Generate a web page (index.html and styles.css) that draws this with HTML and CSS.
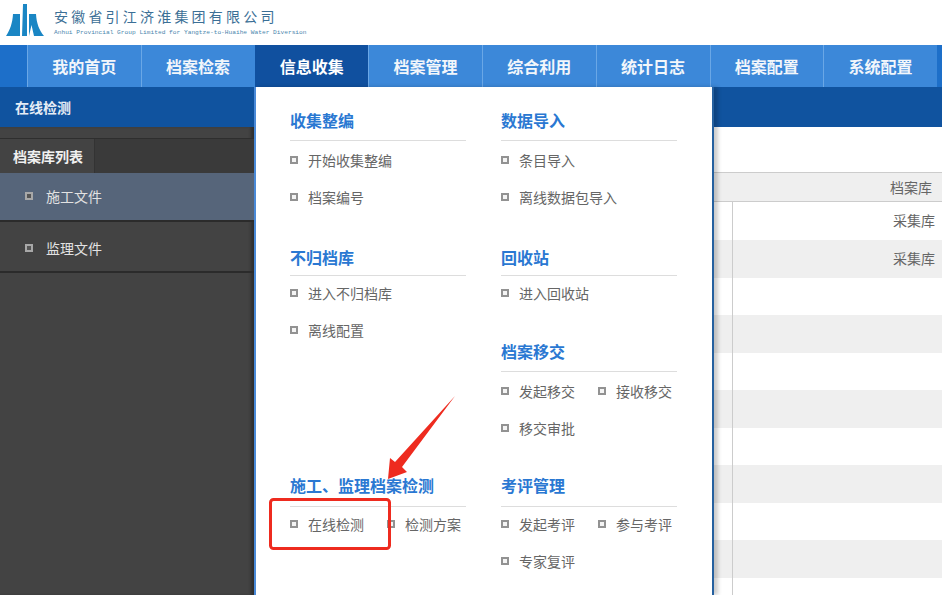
FILE: index.html
```html
<!DOCTYPE html>
<html lang="zh-CN">
<head>
<meta charset="utf-8">
<title>在线检测</title>
<link rel="stylesheet" href="styles.css">
</head>
<body>
<div class="page">
  <header class="brand">
    <svg class="logo" width="38" height="32" viewBox="0 0 38 32">
      <path d="M7 10h7v22H0c4-6 6.500-13 7-22z"/>
      <path d="M17 0h4v32h-5z"/>
      <path d="M23 10h7c.5 9 3 16 8 22H28l-2.500-11-2.500 11z"/>
    </svg>
    <div class="brand-text">
      <div class="brand-cn">安徽省引江济淮集团有限公司</div>
      <div class="brand-en">Anhui Provincial Group Limited for Yangtze-to-Huaihe Water Diversion</div>
    </div>
  </header>

  <nav class="nav">
    <a class="nav-item">我的首页</a>
    <a class="nav-item">档案检索</a>
    <a class="nav-item is-active">信息收集</a>
    <a class="nav-item">档案管理</a>
    <a class="nav-item">综合利用</a>
    <a class="nav-item">统计日志</a>
    <a class="nav-item">档案配置</a>
    <a class="nav-item">系统配置</a>
  </nav>

  <div class="subbar">在线检测</div>

  <div class="main">
    <aside class="sidebar">
      <div class="tabs"><span class="tab">档案库列表</span></div>
      <div class="side-item is-current"><i class="bullet"></i>施工文件</div>
      <div class="side-item"><i class="bullet"></i>监理文件</div>
    </aside>
    <section class="content">
      <div class="table">
        <div class="thead"><span>档案库</span></div>
        <div class="row first"><span class="cell">采集库</span></div>
        <div class="row alt"><span class="cell">采集库</span></div>
        <div class="row"><span class="cell"></span></div>
        <div class="row alt"><span class="cell"></span></div>
        <div class="row"><span class="cell"></span></div>
        <div class="row alt"><span class="cell"></span></div>
        <div class="row"><span class="cell"></span></div>
        <div class="row alt"><span class="cell"></span></div>
        <div class="row"><span class="cell"></span></div>
        <div class="row alt"><span class="cell"></span></div>
        <div class="row"><span class="cell"></span></div>
      </div>
    </section>
  </div>

  <div class="menu">
    <div class="menu-col">
      <div class="group">
        <h3>收集整编</h3>
        <ul><li><i class="bullet"></i>开始收集整编</li><li><i class="bullet"></i>档案编号</li></ul>
      </div>
      <div class="group tight gap-a">
        <h3>不归档库</h3>
        <ul><li><i class="bullet"></i>进入不归档库</li><li><i class="bullet"></i>离线配置</li></ul>
      </div>
      <div class="group lifted gap-d">
        <h3>施工、监理档案检测</h3>
        <ul class="duo"><li><i class="bullet"></i>在线检测</li><li><i class="bullet"></i>检测方案</li></ul>
      </div>
    </div>
    <div class="menu-col">
      <div class="group">
        <h3>数据导入</h3>
        <ul><li><i class="bullet"></i>条目导入</li><li><i class="bullet"></i>离线数据包导入</li></ul>
      </div>
      <div class="group tight gap-a">
        <h3>回收站</h3>
        <ul><li><i class="bullet"></i>进入回收站</li></ul>
      </div>
      <div class="group gap-b">
        <h3>档案移交</h3>
        <ul class="duo"><li><i class="bullet"></i>发起移交</li><li><i class="bullet"></i>接收移交</li><li><i class="bullet"></i>移交审批</li></ul>
      </div>
      <div class="group lifted gap-c">
        <h3>考评管理</h3>
        <ul class="duo"><li><i class="bullet"></i>发起考评</li><li><i class="bullet"></i>参与考评</li><li><i class="bullet"></i>专家复评</li></ul>
      </div>
    </div>
  </div>

  <svg class="annot" width="944" height="595" viewBox="0 0 944 595">
    <rect x="270.500" y="499.500" width="119" height="49" rx="3" fill="none" stroke="#ee2b1f" stroke-width="3"/>
    <polygon points="455,396 402,467 407,472 388,479 390,458 395,462" fill="#ee2b1f"/>
  </svg>
</div>
</body>
</html>
```
FILE: styles.css
```css
* { box-sizing: border-box; }
html, body { margin: 0; padding: 0; background: #fff; }
body { font-family: "Noto Sans CJK SC", "Liberation Sans", sans-serif; color: #666; }
.page { position: relative; width: 944px; height: 595px; overflow: hidden; background: #fff; }

.brand { height: 45px; display: flex; align-items: flex-start; padding: 4px 0 0 6px; gap: 10px; }
.logo { fill: #1a86c4; flex: none; }
.brand-text { padding-top: 3px; }
.brand-cn { font-size: 14px; line-height: 19px; letter-spacing: 3.200px; color: #3b6f96; white-space: nowrap; }
.brand-en { margin-top: 2px; font-family: "Liberation Mono", monospace; font-size: 6.200px; line-height: 9px; color: #4b86ad; white-space: nowrap; }

.nav { width: 942px; height: 42px; display: flex; padding: 0 5px 0 27px; background: #1d6fc9; }
.nav-item { flex: 1; display: flex; align-items: center; justify-content: center; font-size: 16px; line-height: 20px; font-weight: 700; color: #f2f6fb; background: #3c88d9; border-left: 1px solid #6aa7e6; }
.nav-item.is-active { background: #10509f; border-left-color: #10509f; color: #fff; }

.subbar { width: 942px; height: 40px; background: #10539f; padding: 0 15px; font-size: 14px; line-height: 40px; font-weight: 700; color: #e6edf6; }

.main { width: 942px; height: 468px; display: flex; }
.sidebar { width: 254px; flex: none; background: #434343; box-shadow: inset -4px 0 3px -1px #2f2f2f; padding-top: 11px; }
.tabs { height: 35px; display: flex; background: #3a3a3a; border-top: 1px solid #2e2e2e; }
.tab { width: 95px; padding-left: 13px; font-size: 14px; line-height: 34px; font-weight: 700; color: #f0f0f0; background: #434343; border-right: 1px solid #333; }
.side-item { height: 51px; display: flex; align-items: center; padding: 2px 0 0 25px; font-size: 14px; color: #e2e2e2; border-bottom: 2px solid #2b2b2b; }
.side-item .bullet { margin-right: 13px; border-color: #a8a8a8; background: #555; }
.side-item.is-current { height: 49px; padding: 0 0 2px 25px; background: #56657a; }

.bullet { flex: none; display: inline-block; width: 8px; height: 8px; border: 2px solid #929292; background: #f4f4f4; }

.content { flex: 1; padding-top: 45px; }
.thead { height: 30px; padding-right: 10px; display: flex; align-items: center; justify-content: flex-end; background: #efefef; border-top: 1px solid #ccc; border-bottom: 1px solid #ccc; font-size: 14px; }
.row { height: 37.500px; display: flex; padding-left: 478px; }
.row.first { height: 38px; }
.row.alt { background: #efefef; }
.cell { flex: 1; border-left: 1px solid #ccc; padding-right: 7px; text-align: right; font-size: 14px; line-height: 36px; }

.menu { position: absolute; z-index: 2; top: 87px; left: 254px; width: 460px; height: 508px; display: flex; gap: 35px; padding: 13px 0 0 34px; background: #fff; border-left: 2px solid #4a8ad8; border-right: 2px solid #25609f; box-shadow: 4px 0 4px rgba(0, 0, 0, .2); }
.menu-col { width: 176px; flex: none; }
.group h3 { margin: 0; height: 41px; border-bottom: 1px solid #ddd; font-size: 16px; line-height: 40px; font-weight: 700; color: #2a78d2; white-space: nowrap; }
.group.tight h3 { height: 35px; line-height: 33px; }
.group.lifted h3 { line-height: 38px; }
.group ul { margin: 0; padding: 0; list-style: none; }
.group.tight ul, .group.lifted ul { margin-top: -2px; }
.group li { height: 37px; display: flex; align-items: center; font-size: 14px; color: #666; white-space: nowrap; }
.group li .bullet { margin-right: 10px; }
.group .duo { display: grid; grid-template-columns: 97px 97px; }
.gap-a { margin-top: 26px; }
.gap-b { margin-top: 20px; }
.gap-c { margin-top: 20px; }
.gap-d { margin-top: 118px; }

.annot { position: absolute; z-index: 3; top: 0; left: 0; pointer-events: none; }
```
